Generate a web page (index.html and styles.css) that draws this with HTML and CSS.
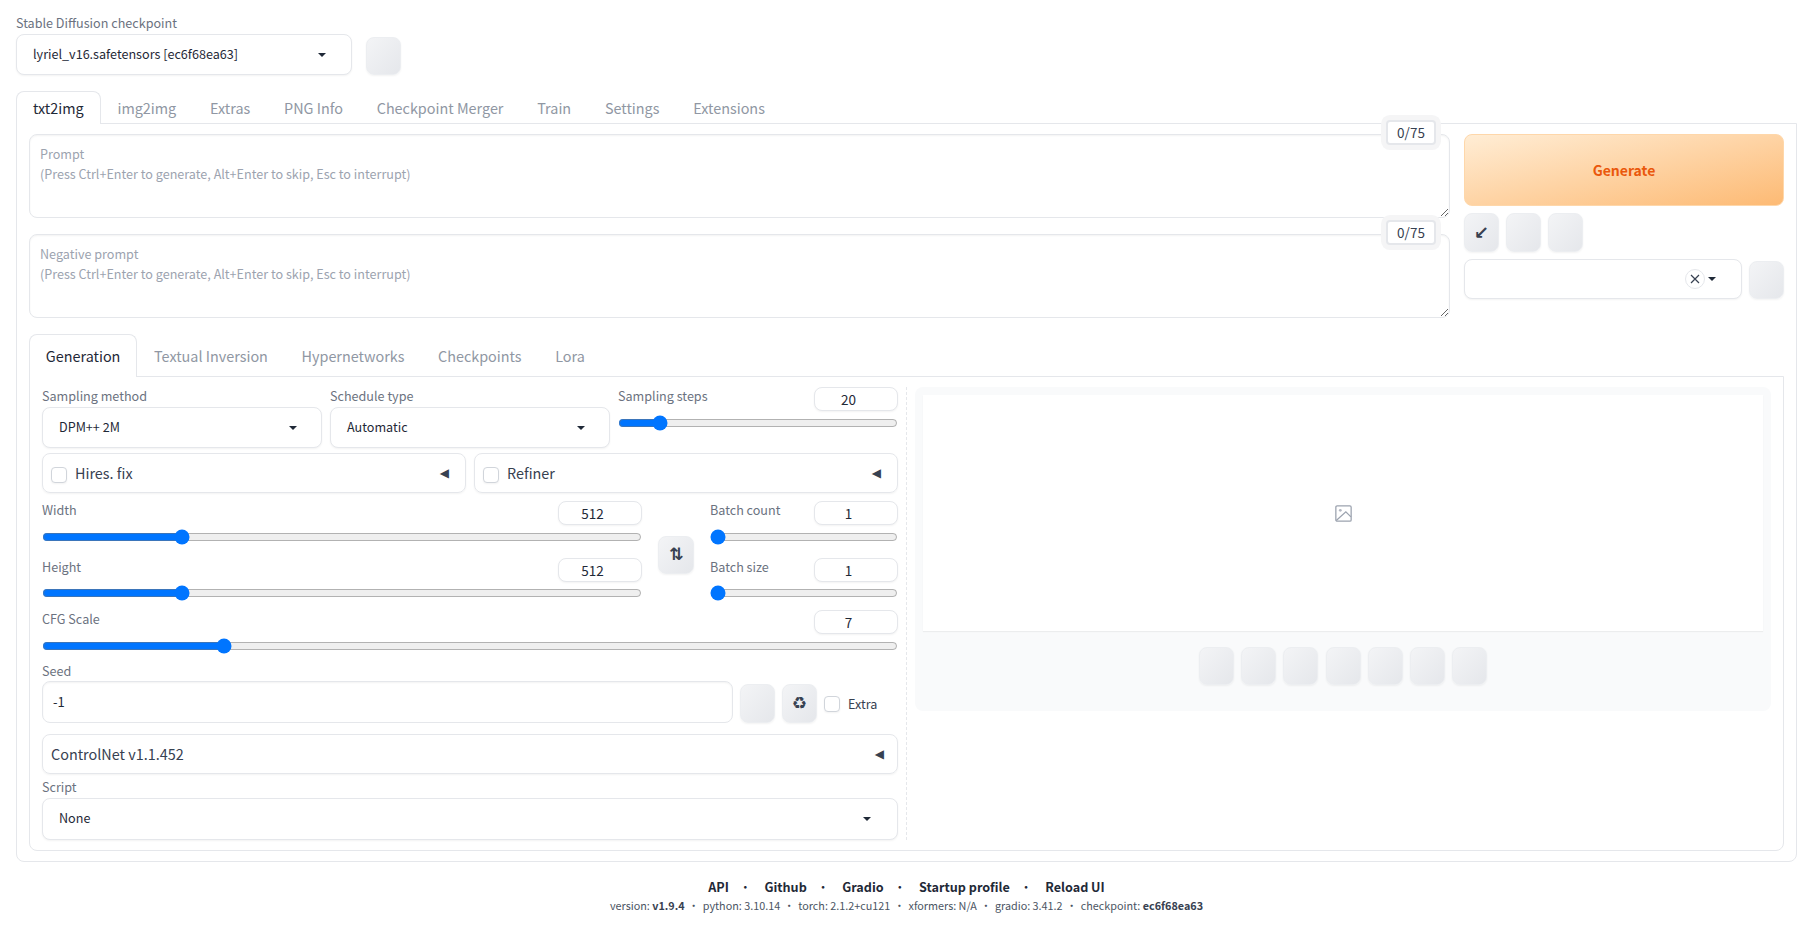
FILE: index.html
```html
<!DOCTYPE html>
<html lang="en">
<head>
    <meta charset="UTF-8">
    <meta name="viewport" content="width=device-width, initial-scale=1.0">
    <title>Stable Diffusion</title>
    <link rel="stylesheet" href="styles.css">
</head>
<body>

    <div class="page">
        <div class="checkpoint-row">
            <div class="checkpoint">
                <label class="field-label">Stable Diffusion checkpoint</label>
                <div class="dropdown">
                    <span class="dropdown-value">lyriel_v16.safetensors [ec6f68ea63]</span>
                    <span class="caret"></span>
                </div>
            </div>
            <button class="tool checkpoint-refresh"></button>
        </div>

        <nav class="tabs">
            <button class="tab active">txt2img</button>
            <button class="tab">img2img</button>
            <button class="tab">Extras</button>
            <button class="tab">PNG Info</button>
            <button class="tab">Checkpoint Merger</button>
            <button class="tab">Train</button>
            <button class="tab">Settings</button>
            <button class="tab">Extensions</button>
        </nav>

        <main class="tab-panel">
            <div class="top-area">
                <div class="prompts">
                    <div class="prompt">
                        <textarea placeholder="Prompt&#10;(Press Ctrl+Enter to generate, Alt+Enter to skip, Esc to interrupt)"></textarea>
                        <div class="token-counter">0/75</div>
                    </div>
                    <div class="prompt">
                        <textarea placeholder="Negative prompt&#10;(Press Ctrl+Enter to generate, Alt+Enter to skip, Esc to interrupt)"></textarea>
                        <div class="token-counter">0/75</div>
                    </div>
                </div>
                <div class="actions">
                    <button class="generate">Generate</button>
                    <div class="tool-row">
                        <button class="tool glyph arrow">&#8601;</button>
                        <button class="tool"></button>
                        <button class="tool"></button>
                    </div>
                    <div class="style-row">
                        <div class="dropdown style-select">
                            <span class="clear">
                                <svg viewBox="0 0 10 10" width="10" height="10"><path d="M1 1L9 9M9 1L1 9" stroke="#374151" stroke-width="1.2" fill="none"/></svg>
                            </span>
                            <span class="caret"></span>
                        </div>
                        <button class="tool style-apply"></button>
                    </div>
                </div>
            </div>

            <nav class="tabs sub-tabs">
                <button class="tab active">Generation</button>
                <button class="tab">Textual Inversion</button>
                <button class="tab">Hypernetworks</button>
                <button class="tab">Checkpoints</button>
                <button class="tab">Lora</button>
            </nav>

            <div class="sub-panel">
                <div class="settings">
                    <div class="sampler-row">
                        <div class="sampler-field">
                            <label class="field-label">Sampling method</label>
                            <div class="dropdown">
                                <span class="dropdown-value">DPM++ 2M</span>
                                <span class="caret"></span>
                            </div>
                        </div>
                        <div class="sampler-field">
                            <label class="field-label">Schedule type</label>
                            <div class="dropdown">
                                <span class="dropdown-value">Automatic</span>
                                <span class="caret"></span>
                            </div>
                        </div>
                        <div class="slider sampler-field">
                            <div class="slider-head">
                                <label class="field-label">Sampling steps</label>
                                <input type="number" value="20">
                            </div>
                            <input type="range" min="1" max="150" value="20">
                        </div>
                    </div>

                    <div class="accordion-row">
                        <div class="accordion">
                            <input type="checkbox">
                            <span class="accordion-title">Hires. fix</span>
                            <span class="fold">&#9664;</span>
                        </div>
                        <div class="accordion">
                            <input type="checkbox">
                            <span class="accordion-title">Refiner</span>
                            <span class="fold">&#9664;</span>
                        </div>
                    </div>

                    <div class="size-row">
                        <div class="size-col size-main">
                            <div class="slider">
                                <div class="slider-head">
                                    <label class="field-label">Width</label>
                                    <input type="number" value="512">
                                </div>
                                <input type="range" min="64" max="2048" value="512">
                            </div>
                            <div class="slider">
                                <div class="slider-head">
                                    <label class="field-label">Height</label>
                                    <input type="number" value="512">
                                </div>
                                <input type="range" min="64" max="2048" value="512">
                            </div>
                        </div>
                        <button class="tool glyph swap">&#8645;</button>
                        <div class="size-col size-batch">
                            <div class="slider">
                                <div class="slider-head">
                                    <label class="field-label">Batch count</label>
                                    <input type="number" value="1">
                                </div>
                                <input type="range" min="1" max="100" value="1">
                            </div>
                            <div class="slider">
                                <div class="slider-head">
                                    <label class="field-label">Batch size</label>
                                    <input type="number" value="1">
                                </div>
                                <input type="range" min="1" max="8" value="1">
                            </div>
                        </div>
                    </div>

                    <div class="slider cfg">
                        <div class="slider-head">
                            <label class="field-label">CFG Scale</label>
                            <input type="number" value="7">
                        </div>
                        <input type="range" min="1" max="30" value="7">
                    </div>

                    <div class="seed">
                        <label class="field-label">Seed</label>
                        <div class="seed-row">
                            <input class="seed-input" type="text" value="-1">
                            <button class="tool"></button>
                            <button class="tool glyph recycle">&#9851;</button>
                            <label class="extra"><input type="checkbox"><span>Extra</span></label>
                        </div>
                    </div>

                    <div class="accordion controlnet">
                        <span class="accordion-title">ControlNet v1.1.452</span>
                        <span class="fold">&#9664;</span>
                    </div>

                    <div class="script">
                        <label class="field-label">Script</label>
                        <div class="dropdown">
                            <span class="dropdown-value">None</span>
                            <span class="caret"></span>
                        </div>
                    </div>
                </div>

                <div class="output">
                    <div class="gallery">
                        <svg viewBox="0 0 16 16" width="17" height="17" fill="none" stroke="#9ca3af" stroke-width="1.2">
                            <rect x="0.8" y="0.8" width="14.4" height="14.4" rx="1.2"/>
                            <circle cx="5" cy="5" r="1.3" fill="#b4b8c2" stroke="none"/>
                            <path d="M1.2 14.6L10.2 6.4L15 11.2"/>
                        </svg>
                    </div>
                    <div class="output-tools">
                        <button class="tool"></button>
                        <button class="tool"></button>
                        <button class="tool"></button>
                        <button class="tool"></button>
                        <button class="tool"></button>
                        <button class="tool"></button>
                        <button class="tool"></button>
                    </div>
                </div>
            </div>
        </main>

        <footer class="footer">
            <div class="footer-links">
                <a>API</a><span class="dot">&bull;</span>
                <a>Github</a><span class="dot">&bull;</span>
                <a>Gradio</a><span class="dot">&bull;</span>
                <a>Startup profile</a><span class="dot">&bull;</span>
                <a>Reload UI</a>
            </div>
            <div class="versions">
                version: <b>v1.9.4</b><span class="sep">&bull;</span>python: 3.10.14<span class="sep">&bull;</span>torch: 2.1.2+cu121<span class="sep">&bull;</span>xformers: N/A<span class="sep">&bull;</span>gradio: 3.41.2<span class="sep">&bull;</span>checkpoint: <b>ec6f68ea63</b>
            </div>
        </footer>
    </div>

</body>
</html>
```
FILE: styles.css
```css
* {
    box-sizing: border-box;
}

body {
    margin: 0;
    background-color: #fff;
    color: #1f2937;
    font-family: "Noto Sans CJK SC", "Open Sans", sans-serif;
    font-size: 12.6px;
    line-height: 1.2;
}

button,
input,
textarea {
    font-family: inherit;
}

.page {
    padding: 14px 9px 0 16px;
}

.field-label {
    display: block;
    color: #6b7280;
    font-size: 12.6px;
    line-height: 18px;
    padding-bottom: 2px;
}

/* checkpoint */
.checkpoint-row {
    display: flex;
    gap: 14px;
    align-items: flex-end;
}

.checkpoint {
    width: 336px;
}

.dropdown {
    display: flex;
    align-items: center;
    height: 41px;
    padding: 0 25px 0 16px;
    background-color: #fff;
    border: 1px solid #e5e7eb;
    border-radius: 8px;
    box-shadow: 0 1px 2px rgba(0, 0, 0, 0.05);
}

.dropdown-value {
    flex-grow: 1;
    font-size: 12.6px;
    padding-bottom: 2px;
}

.caret {
    width: 0;
    height: 0;
    border-left: 4px solid transparent;
    border-right: 4px solid transparent;
    border-top: 4px solid #1f2937;
}

.tool {
    flex: none;
    width: 35px;
    height: 38px;
    padding: 0;
    background: linear-gradient(to bottom right, #f3f4f6, #e5e7eb);
    border: 1px solid #eceef1;
    border-radius: 8px;
    box-shadow: 0 1px 2px rgba(0, 0, 0, 0.05);
    color: #374151;
}

.glyph {
    font-family: "DejaVu Sans", sans-serif;
    font-size: 17px;
    font-weight: bold;
    line-height: 1;
}

/* tabs */
.tabs {
    display: flex;
    height: 33px;
    margin-top: 16px;
    position: relative;
    z-index: 1;
}

.tab {
    height: 33px;
    padding: 0 15.9px 2px;
    background: none;
    border: 1px solid transparent;
    border-bottom: none;
    color: #9097a3;
    font-size: 14.4px;
}

.tab.active {
    background-color: #fff;
    border-color: #e5e7eb;
    border-radius: 8px 8px 0 0;
    color: #1f2937;
}

.tab-panel {
    margin-top: -1px;
    padding: 10px 12px;
    border: 1px solid #e5e7eb;
    border-radius: 0 0 8px 8px;
}

/* prompts and generate */
.top-area {
    display: flex;
    gap: 14px;
}

.prompts {
    display: flex;
    flex-direction: column;
    flex-grow: 1;
    gap: 16px;
}

.prompt {
    position: relative;
}

.prompt textarea {
    display: block;
    width: 100%;
    height: 84px;
    padding: 9px 10px;
    border: 1px solid #e5e7eb;
    border-radius: 8px;
    box-shadow: inset 0 1px 2px rgba(0, 0, 0, 0.05);
    font-size: 12.6px;
    line-height: 20px;
    resize: vertical;
}

.prompt textarea::placeholder {
    color: #9ca3af;
}

.token-counter {
    position: absolute;
    top: -14px;
    right: 14px;
    width: 50px;
    height: 25px;
    padding-top: 2px;
    background-color: #fff;
    border: 2px solid #e5e7eb;
    border-radius: 4px;
    box-shadow: 0 0 0 5px #f5f5f6;
    color: #374151;
    font-size: 13.5px;
    text-align: center;
}

.actions {
    flex: 0 0 320px;
}

.generate {
    display: block;
    width: 100%;
    height: 72px;
    background: linear-gradient(to bottom right, #ffedd5, #fdba74);
    border: 1px solid #fed7aa;
    border-radius: 8px;
    color: #ea580c;
    font-size: 14px;
    font-weight: 600;
}

.tool-row {
    display: flex;
    gap: 7px;
    margin-top: 7px;
}

.tool-row .tool {
    height: 39px;
}

.arrow {
    font-size: 18px;
}

.style-row {
    display: flex;
    gap: 7px;
    align-items: flex-end;
    margin-top: 7px;
}

.style-select {
    flex-grow: 1;
    justify-content: flex-end;
    gap: 3px;
    height: 40px;
    padding-right: 25px;
}

.clear {
    display: flex;
    align-items: center;
    justify-content: center;
    width: 20px;
    height: 20px;
    border: 1px solid #e5e7eb;
    border-radius: 50%;
}

/* generation panel */
.sub-tabs {
    height: 43px;
    margin-top: 16px;
}

.sub-tabs .tab {
    height: 43px;
    padding: 0 15.8px 2px;
}

.sub-panel {
    display: grid;
    grid-template-columns: 865px 1fr;
    gap: 8px;
    margin-top: -1px;
    padding: 10px 12px;
    border: 1px solid #e5e7eb;
    border-radius: 0 0 8px 8px;
}

.settings {
    padding-right: 8px;
    border-right: 1px dashed #e5e7eb;
}

.sampler-row {
    display: flex;
    gap: 8px;
    height: 61px;
}

.sampler-field {
    flex: 1 1 0;
}

.sampler-field .dropdown {
    padding-right: 24px;
}

.slider-head {
    display: flex;
    justify-content: space-between;
    height: 24px;
}

.slider-head input {
    width: 84px;
    height: 24px;
    padding: 0 6px;
    border: 1px solid #e5e7eb;
    border-radius: 8px;
    box-shadow: 0 1px 2px rgba(0, 0, 0, 0.05);
    color: #1f2937;
    font-size: 13.5px;
    text-align: center;
}

.slider input[type="range"] {
    display: block;
    width: 100%;
    height: 16px;
    margin: 3.5px 0 0;
}

.accordion-row {
    display: flex;
    gap: 8px;
    margin-top: 5px;
}

.accordion {
    display: flex;
    flex: 1 1 0;
    align-items: center;
    height: 40px;
    padding: 0 16px 0 8px;
    border: 1px solid #e5e7eb;
    border-radius: 8px;
    box-shadow: 0 1px 2px rgba(0, 0, 0, 0.05);
}

input[type="checkbox"] {
    width: 16px;
    height: 16px;
    margin: 3px 8px 0 0;
    appearance: none;
    background-color: #fff;
    border: 1px solid #d1d5db;
    border-radius: 4px;
    box-shadow: 0 1px 2px rgba(0, 0, 0, 0.05);
}

.accordion-title {
    flex-grow: 1;
    color: #374151;
    font-size: 14.4px;
    padding-bottom: 1px;
}

.fold {
    color: #374151;
    font-family: "DejaVu Sans", sans-serif;
    font-size: 12px;
}

.size-row {
    display: flex;
    margin-top: 8px;
}

.size-col {
    display: flex;
    flex-direction: column;
    gap: 13px;
}

.size-main {
    width: 600px;
}

.swap {
    width: 36px;
    align-self: center;
    margin: 7px 16px 0;
}

.size-batch {
    flex-grow: 1;
}

.cfg {
    margin-top: 9px;
}

.seed {
    margin-top: 8.5px;
}

.seed .field-label {
    padding-bottom: 1px;
}

.seed-row {
    display: flex;
    gap: 7px;
    align-items: flex-end;
}

.seed-input {
    flex-grow: 1;
    height: 42px;
    padding: 0 10px 2px;
    border: 1px solid #e5e7eb;
    border-radius: 8px;
    box-shadow: inset 0 1px 2px rgba(0, 0, 0, 0.05);
    color: #1f2937;
    font-size: 13px;
}

.seed-row .tool {
    height: 39px;
}

.extra {
    display: flex;
    align-items: center;
    width: 74px;
    height: 39px;
    color: #374151;
    font-size: 12.6px;
}

.extra input {
    margin: 0 8px 0 0;
}

.controlnet {
    margin-top: 11px;
    padding-right: 13px;
}

.script {
    margin-top: 4px;
}

.script .dropdown {
    height: 42px;
    padding-right: 26px;
}

/* output */
.output {
    height: 324px;
    padding: 8px;
    background-color: #f9fafb;
    border-radius: 8px;
}

.gallery {
    display: flex;
    align-items: center;
    justify-content: center;
    height: 236px;
    background-color: #fff;
    box-shadow: 0 1px 1px rgba(0, 0, 0, 0.05);
}

.output-tools {
    display: flex;
    justify-content: center;
    gap: 7.2px;
    margin-top: 16px;
}

/* footer */
.footer {
    margin-top: 15px;
    text-align: center;
}

.footer-links {
    font-size: 12.6px;
    font-weight: 600;
    line-height: 19px;
}

.dot {
    margin: 0 10px;
    font-weight: normal;
}

.versions {
    color: #4b5563;
    font-size: 10.8px;
    line-height: 18px;
}

.versions b {
    font-weight: 600;
    color: #374151;
}

.sep {
    margin: 0 3.7px;
}
```
